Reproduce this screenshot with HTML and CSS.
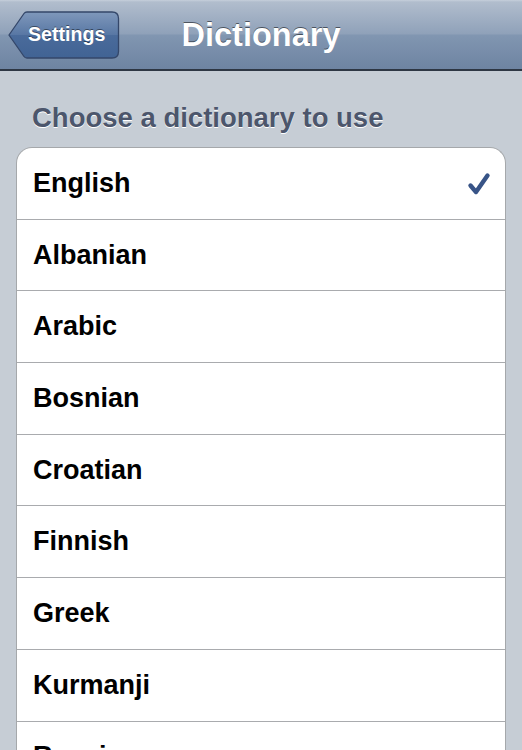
FILE: index.html
```html
<!DOCTYPE html>
<html>
<head>
<meta charset="utf-8">
<link rel="stylesheet" href="styles.css">
</head>
<body>
<div class="navbar">
  <div class="back">
    <svg class="back-shape" width="112" height="48" viewBox="0 0 112 48">
      <defs>
        <linearGradient id="bg" x1="0" y1="0" x2="0" y2="1">
          <stop offset="0" stop-color="#7f98bb"/>
          <stop offset="0.5" stop-color="#5877a4"/>
          <stop offset="0.5" stop-color="#4a6b9b"/>
          <stop offset="1" stop-color="#416394"/>
        </linearGradient>
      </defs>
      <path d="M1 24 L16 2.5 Q17 1 19 1 L104 1 Q110.5 1 110.5 7.5 L110.5 40.5 Q110.5 47 104 47 L19 47 Q17 47 16 45.5 Z" fill="url(#bg)" stroke="#34476a" stroke-width="1.3"/>
    </svg>
    <span class="back-label">Settings</span>
  </div>
  <div class="title">Dictionary</div>
</div>
<div class="content">
  <div class="section-header">Choose a dictionary to use</div>
  <div class="table">
    <div class="row"><span>English</span>
      <svg class="check" width="24" height="24" viewBox="0 0 24 24"><path d="M3.5 13.5 L9 20 L20.5 3.5" fill="none" stroke="#385487" stroke-width="4.4" stroke-linecap="round" stroke-linejoin="round"/></svg>
    </div>
    <div class="row"><span>Albanian</span></div>
    <div class="row"><span>Arabic</span></div>
    <div class="row"><span>Bosnian</span></div>
    <div class="row"><span>Croatian</span></div>
    <div class="row"><span>Finnish</span></div>
    <div class="row"><span>Greek</span></div>
    <div class="row"><span>Kurmanji</span></div>
    <div class="row"><span>Russian</span></div>
  </div>
</div>
</body>
</html>
```
FILE: styles.css
```css
html, body {
  margin: 0;
  padding: 0;
}
body {
  width: 522px;
  height: 750px;
  overflow: hidden;
  background: #c6cdd5;
  font-family: "Liberation Sans", Arial, sans-serif;
}
.navbar {
  height: 69px;
  border-bottom: 2px solid #2e3744;
  background: linear-gradient(to bottom, #c6cfdb 0px, #b1bdcd 2px, #8fa1b9 34px, #8196b1 35px, #6e84a2 69px);
  display: flex;
  align-items: center;
  position: relative;
}
.back {
  position: relative;
  margin-left: 8px;
  width: 112px;
  height: 48px;
  display: flex;
  align-items: center;
}
.back-shape {
  position: absolute;
  left: 0;
  top: 0;
}
.back-label {
  position: relative;
  margin-left: 20px;
  color: #fff;
  font-weight: bold;
  font-size: 19.6px;
  text-shadow: 0 -1px 0 rgba(0,0,0,0.45);
}
.title {
  position: absolute;
  left: 0;
  right: 0;
  top: 15px;
  text-align: center;
  color: #fff;
  font-weight: bold;
  font-size: 32.5px;
  line-height: 40px;
  text-shadow: 0 -1px 0 rgba(0,0,0,0.5);
  pointer-events: none;
}
.content {
  padding: 30px 16px 0 16px;
}
.section-header {
  padding-left: 16px;
  color: #4c566c;
  font-weight: bold;
  font-size: 27.5px;
  line-height: 34px;
  text-shadow: 0 1px 0 #fff;
  margin-bottom: 12px;
}
.table {
  background: #fff;
  border: 1.5px solid #a5a8ab;
  border-bottom: none;
  border-radius: 16px 16px 0 0;
  overflow: hidden;
}
.row {
  height: 70.7px;
  border-bottom: 1px solid #a9abae;
  display: flex;
  align-items: center;
  justify-content: space-between;
  padding: 0 14px 0 16px;
  font-weight: bold;
  font-size: 27px;
  color: #000;
}
.check {
  margin-top: 2px;
}
```
